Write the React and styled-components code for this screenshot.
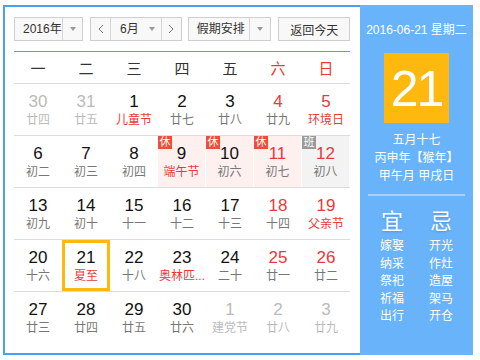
import React from 'react';
import styled, { createGlobalStyle } from 'styled-components';

const GlobalStyle = createGlobalStyle`
  body {
    margin: 0;
    background: #fff;
    font-family: "Liberation Sans", "Noto Sans CJK SC", sans-serif;
  }
`;

const weeks = [
  [
    { d: 30, l: '廿四', o: true }, { d: 31, l: '廿五', o: true }, { d: 1, l: '儿童节', lr: true },
    { d: 2, l: '廿七' }, { d: 3, l: '廿八' }, { d: 4, l: '廿九', r: true }, { d: 5, l: '环境日', r: true, lr: true },
  ],
  [
    { d: 6, l: '初二' }, { d: 7, l: '初三' }, { d: 8, l: '初四' },
    { d: 9, l: '端午节', lr: true, mark: 'rest' }, { d: 10, l: '初六', mark: 'rest' },
    { d: 11, l: '初七', r: true, mark: 'rest' }, { d: 12, l: '初八', r: true, mark: 'work' },
  ],
  [
    { d: 13, l: '初九' }, { d: 14, l: '初十' }, { d: 15, l: '十一' }, { d: 16, l: '十二' },
    { d: 17, l: '十三' }, { d: 18, l: '十四', r: true }, { d: 19, l: '父亲节', r: true, lr: true },
  ],
  [
    { d: 20, l: '十六' }, { d: 21, l: '夏至', lr: true, sel: true }, { d: 22, l: '十八' },
    { d: 23, l: '奥林匹...', lr: true }, { d: 24, l: '二十' }, { d: 25, l: '廿一', r: true }, { d: 26, l: '廿二', r: true },
  ],
  [
    { d: 27, l: '廿三' }, { d: 28, l: '廿四' }, { d: 29, l: '廿五' }, { d: 30, l: '廿六' },
    { d: 1, l: '建党节', o: true }, { d: 2, l: '廿八', o: true }, { d: 3, l: '廿九', o: true },
  ],
];

const weekdays = ['一', '二', '三', '四', '五', '六', '日'];
const good = ['嫁娶', '纳采', '祭祀', '祈福', '出行'];
const bad = ['开光', '作灶', '造屋', '架马', '开仓'];

const RED = '#e83a3a';

const Page = styled.div`
  padding: 5px 0 0 3px;
`;

const Widget = styled.div`
  display: flex;
  width: 470px;
  height: 350px;
`;

const Main = styled.div`
  width: 357px;
  box-sizing: border-box;
  border: 2px solid #4a9ef5;
  border-right: none;
  padding: 10px 10px 0 9px;
`;

const Toolbar = styled.div`
  display: flex;
  height: 24px;
`;

const Select = styled.div`
  display: flex;
  box-sizing: border-box;
  width: ${p => p.$w}px;
  margin-right: ${p => p.$mr || 0}px;
  height: 24px;
  border: 1px solid #cfcfcf;
  background: #f8f8f8;
  font-size: 12px;
  color: #333;
`;

const Label = styled.div`
  flex: 1;
  display: flex;
  align-items: center;
  padding-left: ${p => p.$pl || 9}px;
  line-height: 22px;
  white-space: nowrap;
`;

const ArrowBox = styled.div`
  width: ${p => p.$w || 20}px;
  flex-shrink: 0;
  display: flex;
  align-items: center;
  justify-content: center;
  border-left: ${p => (p.$line ? '1px solid #d6d6d6' : 'none')};
  &::after {
    content: '';
    border-left: 3.5px solid transparent;
    border-right: 3.5px solid transparent;
    border-top: 4px solid #999;
  }
`;

const Nav = styled.div`
  width: 19px;
  flex-shrink: 0;
  display: flex;
  align-items: center;
  justify-content: center;
  border-left: ${p => (p.$left ? '1px solid #d6d6d6' : 'none')};
  border-right: ${p => (p.$right ? '1px solid #d6d6d6' : 'none')};
  svg {
    width: 6px;
    height: 10px;
  }
`;

const TodayButton = styled.div`
  box-sizing: border-box;
  width: 72px;
  height: 24px;
  border: 1px solid #cfcfcf;
  background: #f8f8f8;
  font-size: 12px;
  color: #333;
  display: flex;
  align-items: center;
  justify-content: center;
`;

const Grid = styled.div`
  margin-top: 10px;
  border-top: 1px solid #4a9ef5;
  width: 336px;
`;

const HeadRow = styled.div`
  display: grid;
  grid-template-columns: repeat(7, 48px);
  height: 31px;
  border-bottom: 1px solid #dcdcdc;
`;

const HeadCell = styled.div`
  display: flex;
  align-items: center;
  justify-content: center;
  font-size: 15px;
  color: ${p => (p.$red ? RED : '#333')};
`;

const Week = styled.div`
  display: grid;
  grid-template-columns: repeat(7, 48px);
  height: 51px;
  border-bottom: ${p => (p.$last ? 'none' : '1px solid #dcdcdc')};
`;

const Cell = styled.div`
  position: relative;
  box-sizing: border-box;
  padding-top: 8px;
  text-align: center;
  background: ${p => (p.$mark === 'rest' ? '#fff0f0' : p.$mark === 'work' ? '#f3f3f3' : 'transparent')};
  border-right: ${p => (p.$mark ? '1px solid #fff' : 'none')};
  box-shadow: ${p => (p.$sel ? 'inset 0 0 0 3px #ffb80d' : 'none')};
`;

const Num = styled.div`
  font-size: 17px;
  line-height: 20px;
  color: ${p => (p.$other ? '#bbb' : p.$red ? RED : '#111')};
`;

const Lunar = styled.div`
  font-size: 12px;
  line-height: 16px;
  white-space: nowrap;
  overflow: hidden;
  color: ${p => (p.$other ? '#bbb' : p.$red ? RED : '#777')};
`;

const Badge = styled.span`
  position: absolute;
  top: 0;
  left: 0;
  width: 14px;
  height: 13px;
  line-height: 13px;
  font-size: 11px;
  color: #fff;
  text-align: center;
  background: ${p => (p.$work ? '#999' : '#f44a3a')};
`;

const Side = styled.div`
  width: 113px;
  height: 350px;
  background: #69b3fb;
  color: #fff;
  display: flex;
  flex-direction: column;
  align-items: center;
  padding-top: 17px;
  box-sizing: border-box;
`;

const DateLine = styled.div`
  font-size: 12px;
  line-height: 16px;
  white-space: nowrap;
`;

const DayBox = styled.div`
  margin-top: 15px;
  width: 65px;
  height: 70px;
  background: #ffb80d;
  font-size: 50px;
  line-height: 72px;
  text-align: center;
  letter-spacing: -2px;
`;

const LunarInfo = styled.div`
  margin-top: 8px;
  font-size: 12px;
  line-height: 18px;
  text-align: center;
`;

const Divider = styled.div`
  margin-top: 9px;
  width: 97px;
  height: 2px;
  background: #a6d0fb;
`;

const Advice = styled.div`
  display: flex;
  gap: 3px;
  margin-top: 13px;
`;

const AdviceCol = styled.div`
  width: 46px;
  text-align: center;
`;

const AdviceTitle = styled.div`
  font-size: 22px;
  line-height: 26px;
  margin-bottom: 3px;
  text-shadow: 0 1px 2px rgba(0, 60, 140, 0.25);
`;

const AdviceItem = styled.div`
  font-size: 12px;
  line-height: 17.5px;
`;

const Chevron = ({ dir }) => (
  <svg viewBox="0 0 6 10">
    <polyline
      points={dir === 'left' ? '5,1 1,5 5,9' : '1,1 5,5 1,9'}
      fill="none"
      stroke="#777"
      strokeWidth="1"
    />
  </svg>
);

export default function App() {
  return (
    <Page>
      <GlobalStyle />
      <Widget>
        <Main>
          <Toolbar>
            <Select $w={69} $mr={7}>
              <Label $pl={8}>2016年</Label>
              <ArrowBox $line $w={20} />
            </Select>
            <Select $w={92} $mr={6}>
              <Nav $right><Chevron dir="left" /></Nav>
              <Label $pl={9}>6月</Label>
              <ArrowBox $w={18} />
              <Nav $left><Chevron dir="right" /></Nav>
            </Select>
            <Select $w={84} $mr={7}>
              <Label $pl={8}>假期安排</Label>
              <ArrowBox $line $w={20} />
            </Select>
            <TodayButton>返回今天</TodayButton>
          </Toolbar>
          <Grid>
            <HeadRow>
              {weekdays.map((w, i) => (
                <HeadCell key={w} $red={i > 4}>{w}</HeadCell>
              ))}
            </HeadRow>
            {weeks.map((week, wi) => (
              <Week key={wi} $last={wi === weeks.length - 1}>
                {week.map((c, ci) => (
                  <Cell key={ci} $mark={c.mark} $sel={c.sel}>
                    {c.mark && <Badge $work={c.mark === 'work'}>{c.mark === 'work' ? '班' : '休'}</Badge>}
                    <Num $other={c.o} $red={c.r}>{c.d}</Num>
                    <Lunar $other={c.o} $red={c.lr}>{c.l}</Lunar>
                  </Cell>
                ))}
              </Week>
            ))}
          </Grid>
        </Main>
        <Side>
          <DateLine>2016-06-21 星期二</DateLine>
          <DayBox>21</DayBox>
          <LunarInfo>
            <div>五月十七</div>
            <div>丙申年【猴年】</div>
            <div>甲午月 甲戌日</div>
          </LunarInfo>
          <Divider />
          <Advice>
            <AdviceCol>
              <AdviceTitle>宜</AdviceTitle>
              {good.map(g => <AdviceItem key={g}>{g}</AdviceItem>)}
            </AdviceCol>
            <AdviceCol>
              <AdviceTitle>忌</AdviceTitle>
              {bad.map(b => <AdviceItem key={b}>{b}</AdviceItem>)}
            </AdviceCol>
          </Advice>
        </Side>
      </Widget>
    </Page>
  );
}
